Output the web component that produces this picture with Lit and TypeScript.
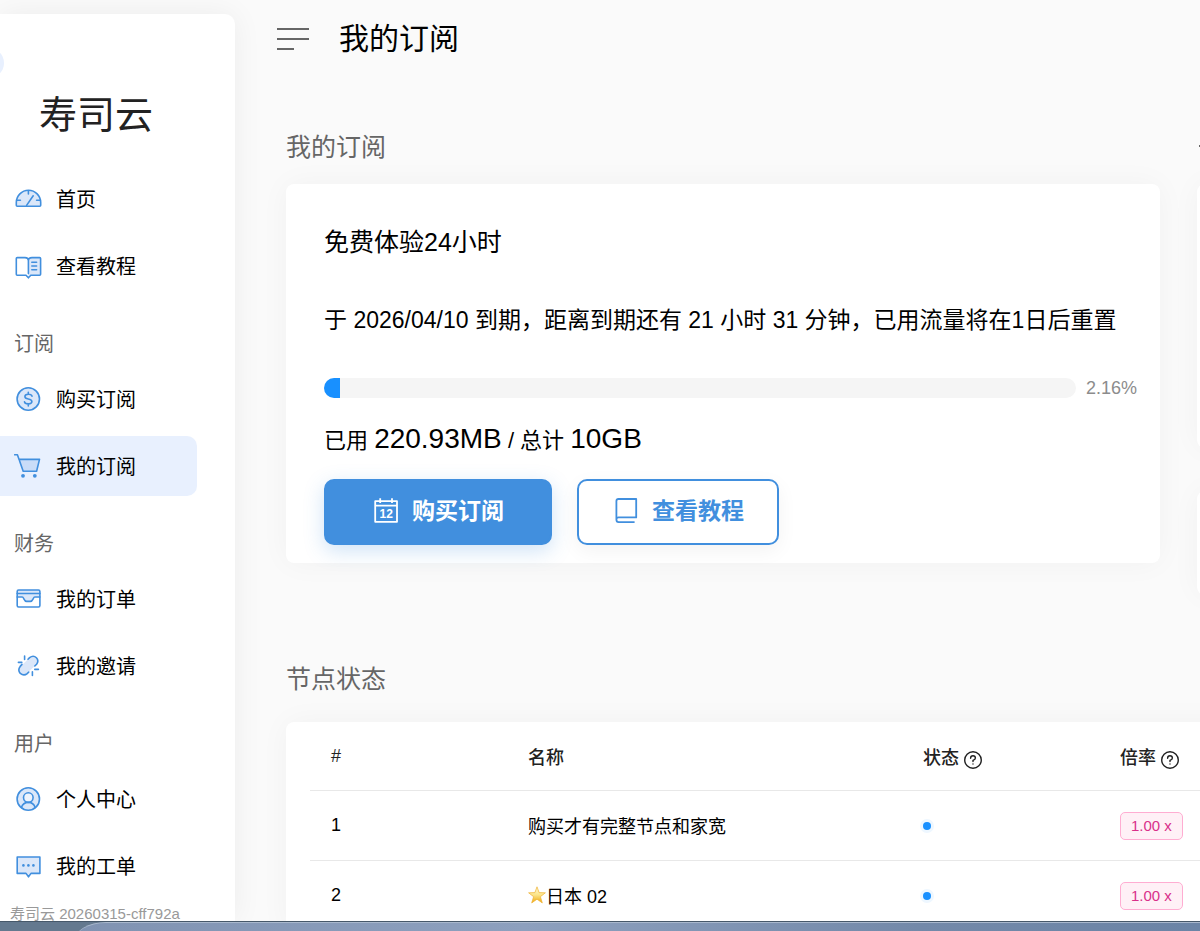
import { LitElement, html, css, svg, nothing } from "lit";
import { customElement, property } from "lit/decorators.js";

const ICONS: Record<string, unknown> = {
  home: svg`
    <path class="f s" d="M3.3 21.3Q2.3 21.3 2.3 20.3V17.5A12.2 12.2 0 0 1 26.7 17.5V20.3Q26.7 21.3 25.7 21.3Z"/>
    <path class="s" d="M14.4 5.8V9M3 15.2H6.4M22.6 15.2H26M12.6 20.4L19.2 10.8"/>`,
  tutorial: svg`
    <path class="f" d="M14.4 8.4Q14.4 5.6 18 5.6H25.6Q26.6 5.6 26.6 6.6V22.2Q26.6 23.2 25.6 23.2H14.4Z"/>
    <path class="s" d="M14.4 21.6V8.4Q14.4 5.6 11 5.6H3.3Q2.3 5.6 2.3 6.6V22.2Q2.3 23.2 3.3 23.2H12L14.4 25.8L16.8 23.2H25.6Q26.6 23.2 26.6 22.2V6.6Q26.6 5.6 25.6 5.6H18Q14.4 5.6 14.4 8.4M17.8 10.2H22.6M17.8 14H22.6M17.8 17.8H22.6"/>`,
  buy: svg`
    <circle class="f s" cx="14.3" cy="14" r="11.2"/>
    <path class="s" d="M18 11.2Q17.6 9.3 14.3 9.3Q10.9 9.3 10.9 11.6Q10.9 13.6 14.3 14Q17.9 14.5 17.9 16.6Q17.9 18.9 14.3 18.9Q10.8 18.9 10.5 16.8M14.3 7.2V9.3M14.3 18.9V21"/>`,
  cart: svg`
    <path class="f" d="M4.8 7.4H25.4L22.6 19H9.6Z"/>
    <path class="s" d="M.7 2.8H3.4L9.2 19.2H22.6L25.5 7.4H5"/>
    <circle class="d" cx="9" cy="23.8" r="1.9"/><circle class="d" cx="20.8" cy="23.8" r="1.9"/>`,
  order: svg`
    <path class="f" d="M3.2 5H25.9V11.8H20L17 16H12L9 11.8H3.2Z"/>
    <rect class="s" x="3.2" y="5" width="22.7" height="17" rx="1.4"/>
    <path class="s" d="M3.2 8.5H25.9M3.2 12H8.2C10 12 9.8 16.4 12.6 16.4H16.4C19.2 16.4 19 12 20.8 12H25.9"/>`,
  invite: svg`
    <path class="f" d="M14 7.2L16.6 4.8Q20.4 3 22.8 6.2Q25 9.4 22.3 12.4L13 21.2Q9.6 24.4 6.3 21.6Q3.4 18.2 6 15Z"/>
    <path class="s" d="M14 7.2L15.6 5.6Q19.4 2.8 22.4 5.8Q25.2 9 22.6 12.2L20.8 14M8 12.4L6.2 14.4Q3.4 18 6.3 21.4Q9.8 24.4 13.2 21.6L14.8 20M10.6 4V7.4M4.4 10.4H7.8M20.8 17.4H24.4M18.4 19.8V23.4"/>`,
  user: svg`
    <circle class="f s" cx="14.3" cy="14" r="11.2"/>
    <circle class="s w" cx="14.3" cy="12.6" r="4.8"/>
    <path class="s" d="M7.4 22.6Q9 17.4 14.3 17.4Q19.6 17.4 21.2 22.6"/>`,
  ticket: svg`
    <path class="f s" d="M3.2 5H25.9V21.4H17L14.5 24.8L12 21.4H3.2Z"/>
    <circle class="d" cx="9.4" cy="13.4" r="1.3"/><circle class="d" cx="14.4" cy="13.4" r="1.3"/><circle class="d" cx="19.4" cy="13.4" r="1.3"/>`,
};

interface Item { icon: string; label: string; active?: boolean }
interface Group { title?: string; items: Item[] }

const NAV: Group[] = [
  { items: [{ icon: "home", label: "首页" }, { icon: "tutorial", label: "查看教程" }] },
  { title: "订阅", items: [{ icon: "buy", label: "购买订阅" }, { icon: "cart", label: "我的订阅", active: true }] },
  { title: "财务", items: [{ icon: "order", label: "我的订单" }, { icon: "invite", label: "我的邀请" }] },
  { title: "用户", items: [{ icon: "user", label: "个人中心" }, { icon: "ticket", label: "我的工单" }] },
];

@customElement("side-nav")
export class SideNav extends LitElement {
  static styles = css`
    :host { display: flex; flex-direction: column; position: relative; background: #fff;
      border-radius: 0 10px 0 0; box-shadow: 0 0 30px rgba(0, 0, 0, 0.06); }
    .knob { position: absolute; left: -26px; top: 34px; width: 30px; height: 30px; padding: 0;
      border: 0; border-radius: 50%; background: #e8f0fe; }
    .brand { margin: 73px 0 26px; padding-left: 39px; font-size: 38px; line-height: 56px;
      font-weight: 400; color: #222; }
    .group { display: flex; flex-direction: column; gap: 7px; padding-bottom: 7px; }
    .label { margin: 0 0 -7px; padding: 16px 14px 0; font-size: 20px; line-height: 50px; font-weight: 400; color: #666; }
    .item { display: flex; align-items: center; gap: 14px; height: 60px; margin-right: 38px; padding-left: 14px;
      border-radius: 0 10px 10px 0; color: #000; font-size: 20px; text-decoration: none; }
    .text { padding-bottom: 2px; }
    .active { background: #e8f0fe; }
    .icon { width: 28px; height: 28px; flex: none; }
    .s { stroke: #418fde; stroke-width: 1.6; fill: none; stroke-linecap: round; stroke-linejoin: round; }
    .f { fill: #dbe7f9; }
    .active .f { fill: #c9dcf8; }
    .w { fill: #eef4fd; }
    .d { fill: #418fde; }
    .version { padding: 0 10px; font-size: 15px; line-height: 22px; color: #999; white-space: nowrap; }
  `;
  render() {
    return html`
      <button class="knob" aria-label="收起"></button>
      <h1 class="brand">寿司云</h1>
      <nav>
        ${NAV.map((g) => html`<div class="group">
          ${g.title ? html`<h2 class="label">${g.title}</h2>` : nothing}
          ${g.items.map((i) => html`<a class="item ${i.active ? "active" : ""}" href="#">
            <svg class="icon" viewBox="0 0 28 28" aria-hidden="true">${ICONS[i.icon]}</svg><span class="text">${i.label}</span></a>`)}
        </div>`)}
      </nav>
      <div class="version">寿司云 20260315-cff792a</div>
    `;
  }
}

@customElement("plan-card")
export class PlanCard extends LitElement {
  @property({ type: Number }) percent = 2.16;
  static styles = css`
    :host { display: block; box-sizing: border-box; padding: 38px 23px 18px 38px; background: #fff;
      border-radius: 8px; box-shadow: 0 0 30px rgba(0, 0, 0, 0.04); }
    .name { margin: 0; font-size: 25px; line-height: 40px; font-weight: 400; }
    .expiry { margin: 38px 0; font-size: 23px; line-height: 40px; white-space: nowrap; }
    .meter { display: flex; align-items: center; gap: 10px; }
    .track { flex: 1; height: 20px; border-radius: 10px; background: #f5f5f5; overflow: hidden; }
    .fill { height: 100%; background: #1890ff; }
    .percent { font-size: 18px; line-height: 20px; color: #8c8c8c; }
    .usage { margin: 20px 0 17px; font-size: 22px; line-height: 42px; }
    .big { font-size: 28px; }
    .actions { display: flex; gap: 25px; }
    .btn { display: flex; align-items: center; justify-content: center; gap: 12px; height: 66px; box-sizing: border-box;
      border: 2px solid #418fde; border-radius: 10px; font: inherit; font-size: 23px; line-height: 30px; font-weight: 700; }
    .primary { padding: 0 46px 2px; background: #418fde; color: #fff; box-shadow: 0 6px 20px rgba(65, 143, 222, 0.25); }
    .outline { padding: 0 33px 2px; background: #fff; color: #418fde; box-shadow: 0 6px 20px rgba(0, 0, 0, 0.05); }
    .icon { width: 28px; height: 28px; fill: none; stroke: currentColor; stroke-width: 1.8; stroke-linejoin: round; }
    .day { font-size: 12px; font-weight: 700; fill: currentColor; stroke: none; text-anchor: middle; }
  `;
  render() {
    return html`
      <h3 class="name">免费体验24小时</h3>
      <p class="expiry">于 2026/04/10 到期，距离到期还有 21 小时 31 分钟，已用流量将在1日后重置</p>
      <div class="meter">
        <div class="track" role="progressbar" aria-label="已用流量" aria-valuenow=${this.percent}>
          <div class="fill" style="width:${this.percent}%"></div>
        </div>
        <span class="percent">${this.percent}%</span>
      </div>
      <p class="usage">已用 <span class="big">220.93MB</span> / 总计 <span class="big">10GB</span></p>
      <div class="actions">
        <button class="btn primary">
          <svg class="icon" viewBox="0 0 28 28" aria-hidden="true">
            <path d="M3.2 4.2H25V24.8H3.2ZM3.2 8.6H25M8.2 1.2V6M20 1.2V6"/>
            <text class="day" x="14.2" y="20.6">12</text>
          </svg>购买订阅</button>
        <button class="btn outline">
          <svg class="icon" viewBox="0 0 28 28" aria-hidden="true">
            <path d="M4.4 22.6V4Q4.4 2 6.4 2H24.2V20.4H6.6Q4.4 20.4 4.4 22.6Q4.4 25.2 6.6 25.2H22.6"/>
          </svg>查看教程</button>
      </div>
    `;
  }
}

@customElement("node-table")
export class NodeTable extends LitElement {
  static styles = css`
    :host { display: block; padding: 0 24px; background: #fff; border-radius: 8px; box-shadow: 0 0 30px rgba(0, 0, 0, 0.04); }
    .table { width: 100%; table-layout: fixed; border-collapse: separate; border-spacing: 0; font-size: 18px; }
    .c1, .c3 { width: 197px; }
    .c2 { width: 395px; }
    .head, .cell { box-sizing: border-box; height: 70px; padding: 0 0 0 21px; border-bottom: 1px solid #e8e8e8; text-align: left; white-space: nowrap; }
    .head { height: 69px; font-weight: 500; color: #222; }
    .help { width: 20px; height: 20px; margin-left: 4px; vertical-align: -6px; fill: none; stroke: currentColor; stroke-width: 1.4; stroke-linecap: round; }
    .row { display: flex; align-items: center; padding-bottom: 2px; }
    .star { width: 18px; height: 18px; }
    .dot { display: block; width: 8px; height: 8px; border-radius: 50%; background: #1890ff; box-shadow: 0 0 0 3px #eef7ff; }
    .tag { display: inline-block; box-sizing: border-box; height: 28px; padding: 0 10px; border: 1px solid #ffadd2; border-radius: 5px;
      background: #fff0f6; color: #d9308a; font-size: 15px; line-height: 26px; vertical-align: middle; }
  `;
  private help() {
    return html`<svg class="help" viewBox="0 0 20 20" role="img" aria-label="说明">
      <circle cx="10" cy="10" r="8.3"/><path d="M7.6 8.2Q7.6 5.8 10 5.8Q12.4 5.8 12.4 8Q12.4 9.4 10 10.4V11.6M10 13.9V14.1"/></svg>`;
  }
  private star() {
    return html`<svg class="star" viewBox="0 0 18 18" role="img" aria-label="星标">
      <defs><linearGradient id="g" x1="0" y1="0" x2="0" y2="1">
        <stop offset="0" stop-color="#fffbd8"/><stop offset=".5" stop-color="#fbe58a"/><stop offset="1" stop-color="#f0a80c"/></linearGradient></defs>
      <path fill="url(#g)" stroke="#eeb030" stroke-width=".7" stroke-linejoin="round" d="M9 .8L11.1 6.6L17.4 6.8L12.4 10.7L14.3 16.9L9 13.2L3.7 16.9L5.6 10.7L.6 6.8L6.9 6.6Z"/></svg>`;
  }
  render() {
    const rows = [
      { id: 1, name: "购买才有完整节点和家宽", star: false },
      { id: 2, name: "日本 02", star: true },
    ];
    return html`<table class="table">
      <colgroup><col class="c1"><col class="c2"><col class="c3"><col></colgroup>
      <thead><tr><th class="head">#</th><th class="head">名称</th><th class="head">状态${this.help()}</th><th class="head">倍率${this.help()}</th></tr></thead>
      <tbody>${rows.map((r) => html`<tr>
        <td class="cell">${r.id}</td>
        <td class="cell"><span class="row">${r.star ? this.star() : nothing}<span>${r.name}</span></span></td>
        <td class="cell"><span class="dot"></span></td>
        <td class="cell"><span class="tag">1.00 x</span></td></tr>`)}</tbody>
    </table>`;
  }
}

@customElement("app-root")
export class AppRoot extends LitElement {
  static styles = css`
    :host { display: flex; flex-direction: column; height: 100vh; overflow: hidden; color: #000;
      font-family: "Liberation Sans", "Noto Sans CJK SC", sans-serif; }
    .window { flex: 1; min-height: 0; display: flex; overflow: hidden; background: #fafafa; }
    .side { flex: none; width: 235px; margin-top: 14px; }
    .main { flex: 1; min-width: 0; overflow: hidden; padding-left: 42px; }
    .top { display: flex; align-items: center; gap: 30px; height: 78px; }
    .menu { width: 32px; height: 24px; padding: 0; border: 0; background: none; }
    .lines { display: block; stroke: #666; stroke-width: 2; }
    .title { margin: 0; font-size: 30px; line-height: 44px; font-weight: 400; }
    .content { margin: 54px -400px 0 9px; }
    .columns { display: grid; grid-template-columns: minmax(0, 1fr) 403px; column-gap: 37px; align-items: start; }
    .heading { margin: 0 0 22px; font-size: 25px; line-height: 30px; font-weight: 400; color: #666; }
    .nodes { margin: 69px 0 28px; }
    .peek { display: flex; flex-direction: column; }
    .mark { display: block; width: 25px; height: 30px; margin: 0 0 22px 1px; stroke: #666; stroke-width: 2; }
    .panel { height: 264px; margin-bottom: 43px; border-radius: 8px; background: #fff; box-shadow: 0 0 30px rgba(0, 0, 0, 0.04); }
    .short { height: 104px; margin: 0; }
    .desk { flex: none; height: 10px; padding-left: 74px; overflow: hidden; box-sizing: border-box;
      background: #64798f; border-top: 1px solid #46586a; }
    .dock { height: 40px; border-top-left-radius: 32px 20px; border-top: 1px solid #a9b8cd;
      background: linear-gradient(90deg, #8093b2, #8da0be 40%, #7389a9 75%, #6b84a6); }
  `;
  render() {
    return html`
      <div class="window">
        <side-nav class="side"></side-nav>
        <main class="main">
          <header class="top">
            <button class="menu" aria-label="菜单">
              <svg class="lines" width="32" height="24" viewBox="0 0 32 24"><path d="M0 2H32M0 12H32M0 22H17"/></svg>
            </button>
            <h1 class="title">我的订阅</h1>
          </header>
          <div class="content">
            <div class="columns">
              <section>
                <h2 class="heading">我的订阅</h2>
                <plan-card></plan-card>
              </section>
              <aside class="peek">
                <svg class="mark" viewBox="0 0 25 30" aria-hidden="true"><path d="M1 14H24"/></svg>
                <div class="panel"></div>
                <div class="panel short"></div>
              </aside>
            </div>
            <section>
              <h2 class="heading nodes">节点状态</h2>
              <node-table></node-table>
            </section>
          </div>
        </main>
      </div>
      <footer class="desk"><div class="dock"></div></footer>
    `;
  }
}
